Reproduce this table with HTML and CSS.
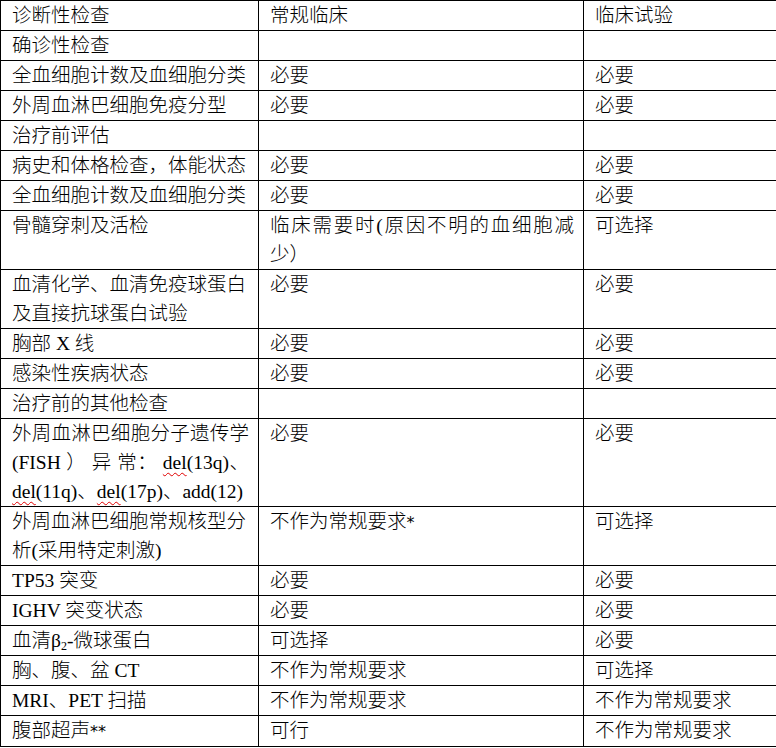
FILE: index.html
```html
<!DOCTYPE html>
<html lang="zh-CN">
<head>
<meta charset="utf-8">
<title>诊断性检查</title>
<link rel="stylesheet" href="styles.css">
</head>
<body>
<table class="grid">
  <colgroup>
    <col class="c1">
    <col class="c2">
    <col class="c3">
  </colgroup>
  <tbody>
    <tr><td>诊断性检查</td><td>常规临床</td><td>临床试验</td></tr>
    <tr><td>确诊性检查</td><td></td><td></td></tr>
    <tr><td>全血细胞计数及血细胞分类</td><td>必要</td><td>必要</td></tr>
    <tr><td>外周血淋巴细胞免疫分型</td><td>必要</td><td>必要</td></tr>
    <tr><td>治疗前评估</td><td></td><td></td></tr>
    <tr><td>病史和体格检查，体能状态</td><td>必要</td><td>必要</td></tr>
    <tr><td>全血细胞计数及血细胞分类</td><td>必要</td><td>必要</td></tr>
    <tr><td>骨髓穿刺及活检</td><td><span class="jl">临床需要时(原因不明的血细胞减</span><span class="ln">少）</span></td><td>可选择</td></tr>
    <tr><td><span class="ln">血清化学、血清免疫球蛋白</span><span class="ln">及直接抗球蛋白试验</span></td><td>必要</td><td>必要</td></tr>
    <tr><td>胸部 X 线</td><td>必要</td><td>必要</td></tr>
    <tr><td>感染性疾病状态</td><td>必要</td><td>必要</td></tr>
    <tr><td>治疗前的其他检查</td><td></td><td></td></tr>
    <tr><td><span class="jl">外周血淋巴细胞分子遗传学</span><span class="jl">(FISH ） 异 常： <span class="sp">del</span>(13q)、</span><span class="ln"><span class="sp">del</span>(11q)、<span class="sp">del</span>(17p)、add(12)</span></td><td>必要</td><td>必要</td></tr>
    <tr><td><span class="ln">外周血淋巴细胞常规核型分</span><span class="ln">析(采用特定刺激)</span></td><td>不作为常规要求<span class="ast">*</span></td><td>可选择</td></tr>
    <tr><td>TP53 突变</td><td>必要</td><td>必要</td></tr>
    <tr><td>IGHV 突变状态</td><td>必要</td><td>必要</td></tr>
    <tr><td>血清β<sub class="sub">2</sub>-微球蛋白</td><td>可选择</td><td>必要</td></tr>
    <tr><td>胸、腹、盆 CT</td><td>不作为常规要求</td><td>可选择</td></tr>
    <tr><td>MRI、PET 扫描</td><td>不作为常规要求</td><td>不作为常规要求</td></tr>
    <tr><td>腹部超声<span class="ast">**</span></td><td>可行</td><td>不作为常规要求</td></tr>
  </tbody>
</table>
</body>
</html>
```
FILE: styles.css
```css
html, body {
  margin: 0;
  padding: 0;
  background: #fff;
}

body {
  font-family: "Liberation Serif", "Noto Sans CJK SC", serif;
  font-size: 19.5px;
  font-weight: 300;
  color: #000;
}

.grid {
  border-collapse: collapse;
  table-layout: fixed;
  width: 776px;
}

.c1 { width: 258px; }
.c2 { width: 325px; }
.c3 { width: 193px; }

.grid td {
  border: 1px solid #000;
  padding: 0 9px 0 11px;
  line-height: 29px;
  height: 29px;
  vertical-align: top;
  white-space: nowrap;
  overflow: hidden;
}

.ln {
  display: block;
}

.jl {
  display: block;
  text-align: justify;
  text-align-last: justify;
}

.sp {
  text-decoration: underline wavy #e00000;
  text-decoration-thickness: 1px;
  text-underline-offset: 3px;
}

.sub {
  font-size: 12px;
  line-height: 0;
  vertical-align: -3px;
}

.ast {
  font-family: "DejaVu Sans", sans-serif;
  font-size: 16px;
  font-weight: 400;
}
```
